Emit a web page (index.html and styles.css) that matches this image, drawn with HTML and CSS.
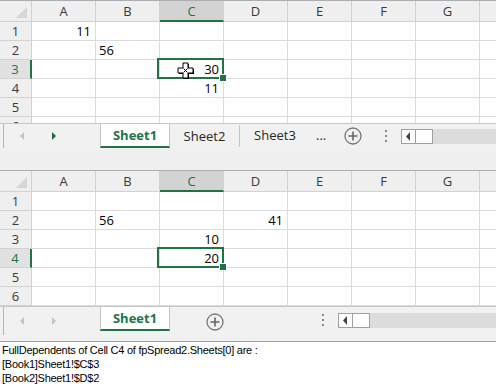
FILE: index.html
```html
<!DOCTYPE html>
<html lang="en">
<head>
  <meta charset="UTF-8" />
  <title>FullDependents</title>
  <link rel="stylesheet" href="styles.css">
</head>
<body>

  <!-- fpSpread1 -->
  <div class="spread top">
    <div class="sheet">
      <div class="grid">
        <div class="h corner"></div><div class="h">A</div><div class="h">B</div><div class="h hsel">C</div><div class="h">D</div><div class="h">E</div><div class="h">F</div><div class="h">G</div><div class="h"></div>

        <div class="r">1</div><div class="num">11</div><div></div><div></div><div></div><div></div><div></div><div></div><div></div>
        <div class="r">2</div><div></div><div>56</div><div></div><div></div><div></div><div></div><div></div><div></div>
        <div class="r rsel">3</div><div></div><div></div>
        <div class="num sel">30
          <svg class="cursor" width="18" height="18" viewBox="0 0 18 18">
            <path d="M6 1h5v5h5v5h-5v5H6v-5H1V6h5z" fill="#000" transform="translate(1 1)"/>
            <path d="M6 1h5v5h5v5h-5v5H6v-5H1V6h5z" fill="#fff" stroke="#000" stroke-width="1" stroke-linejoin="round"/>
            <path d="M6.5 6.5l4 4M10.5 6.5l-4 4" stroke="#000" stroke-width="1"/>
          </svg>
        </div>
        <div></div><div></div><div></div><div></div><div></div>
        <div class="r">4</div><div></div><div></div><div class="num">11</div><div></div><div></div><div></div><div></div><div></div>
        <div class="r">5</div><div></div><div></div><div></div><div></div><div></div><div></div><div></div><div></div>
        <div class="r">6</div><div></div><div></div><div></div><div></div><div></div><div></div><div></div><div></div>
      </div>
    </div>

    <div class="tabbar">
      <div class="edge"></div>
      <div class="nav">
        <svg width="96" height="24"><polygon points="20,8 20,16 16,12" fill="#c3c3c3"/><polygon points="48,8 48,16 52,12" fill="#1d6b3c"/></svg>
      </div>
      <div class="tab active">Sheet1</div>
      <div class="tab sep">Sheet2</div>
      <div class="tab">Sheet3</div>
      <div class="more">...</div>
      <div class="add">
        <svg width="18" height="18" viewBox="0 0 18 18"><circle cx="9" cy="9" r="8" fill="none" stroke="#777" stroke-width="1.3"/><path d="M9 4.5v9M4.5 9h9" stroke="#666" stroke-width="1.6"/></svg>
      </div>
      <div class="dots"><span></span><span></span><span></span></div>
      <div class="hscroll">
        <div class="arrow"><svg width="13" height="13"><polygon points="8,2 8,11 4,6.5" fill="#444"/></svg></div>
        <div class="thumb"></div>
        <div class="track"></div>
      </div>
    </div>
  </div>

  <div class="band"></div>

  <!-- fpSpread2 -->
  <div class="spread bottom">
    <div class="sheet">
      <div class="grid">
        <div class="h corner"></div><div class="h">A</div><div class="h">B</div><div class="h hsel">C</div><div class="h">D</div><div class="h">E</div><div class="h">F</div><div class="h">G</div><div class="h"></div>

        <div class="r">1</div><div></div><div></div><div></div><div></div><div></div><div></div><div></div><div></div>
        <div class="r">2</div><div></div><div>56</div><div></div><div class="num">41</div><div></div><div></div><div></div><div></div>
        <div class="r">3</div><div></div><div></div><div class="num">10</div><div></div><div></div><div></div><div></div><div></div>
        <div class="r rsel">4</div><div></div><div></div><div class="num sel">20</div><div></div><div></div><div></div><div></div><div></div>
        <div class="r">5</div><div></div><div></div><div></div><div></div><div></div><div></div><div></div><div></div>
        <div class="r">6</div><div></div><div></div><div></div><div></div><div></div><div></div><div></div><div></div>
      </div>
    </div>

    <div class="tabbar">
      <div class="edge"></div>
      <div class="nav">
        <svg width="96" height="28"><polygon points="20,10 20,18 16,14" fill="#c3c3c3"/><polygon points="48,10 48,18 52,14" fill="#c3c3c3"/></svg>
      </div>
      <div class="tab active">Sheet1</div>
      <div class="add wide">
        <svg width="18" height="18" viewBox="0 0 18 18"><circle cx="9" cy="9" r="8" fill="none" stroke="#777" stroke-width="1.3"/><path d="M9 4.5v9M4.5 9h9" stroke="#666" stroke-width="1.6"/></svg>
      </div>
      <div class="dots wide"><span></span><span></span><span></span></div>
      <div class="hscroll">
        <div class="arrow"><svg width="13" height="13"><polygon points="8,2 8,11 4,6.5" fill="#444"/></svg></div>
        <div class="thumb"></div>
        <div class="track"></div>
      </div>
    </div>
  </div>

  <div class="output">
    <div>FullDependents of Cell C4 of fpSpread2.Sheets[0] are :</div>
    <div>[Book1]Sheet1!$C$3</div>
    <div>[Book2]Sheet1!$D$2</div>
  </div>

</body>
</html>
```

FILE: styles.css
```css
* { box-sizing:border-box; }
body { margin:0; width:496px; height:392px; overflow:hidden; background:#fff; font-family:"Open Sans",sans-serif; }

.sheet { overflow:hidden; border-top:1px solid #abadb3; }
.top .sheet { height:123px; }
.bottom .sheet { height:136px; }

.grid {
  display:grid; width:544px;
  grid-template-columns:32px repeat(8,64px);
  grid-template-rows:21px; grid-auto-rows:19px;
}
.grid > div {
  border-right:1px solid #dadcdd; border-bottom:1px solid #dadcdd;
  font-size:13px; line-height:18px; padding:0 3px; white-space:nowrap; color:#000;
}
.grid > .h { background:#efefef; color:#3a3a3a; text-align:center; line-height:20px; border-color:#d2d2d2; }
.grid > .r { background:#efefef; color:#3a3a3a; text-align:center; border-color:#d2d2d2; }
.grid > .hsel { background:#d3d3d3; color:#217346; border-bottom:2px solid #217346; }
.grid > .rsel { background:#e1e1e1; color:#217346; border-right:2px solid #217346; }
.grid > .num { text-align:right; padding-right:4px; }

.corner { position:relative; }
.corner::after {
  content:""; position:absolute; right:4px; bottom:3px;
  border-left:11px solid transparent; border-bottom:11px solid #d6d6d6;
}

.sel { position:relative; }
.sel::before {
  content:""; position:absolute; left:-3px; top:-2px; right:-1px; bottom:-1px;
  border:2px solid #217346;
}
.sel::after {
  content:""; position:absolute; right:-4px; bottom:-4px; width:6px; height:6px;
  background:#217346; border:1px solid #fff;
}
.cursor { position:absolute; left:17px; top:2px; z-index:2; }

.tabbar {
  display:flex; height:25px; background:#f1f1f1;
  border-top:1px solid #c6c6c6; font-size:13px; color:#262626;
}
.bottom .tabbar { height:29px; }
.edge { width:4px; border-right:1px solid #b5b5b5; }
.nav { width:96px; }
.nav svg { display:block; }
.tab { width:70px; text-align:center; line-height:23px; }
.tab.active {
  background:#fff; color:#217346; font-weight:bold;
  border-left:1px solid #c6c6c6; border-right:1px solid #c6c6c6;
  border-bottom:2px solid #217346; height:24px;
}
.tab.sep { border-right:1px solid #c6c6c6; height:22px; margin-top:1px; }
.more { width:26px; padding-left:6px; line-height:22px; }
.add { width:34px; display:flex; align-items:center; justify-content:center; }
.add.wide { width:90px; align-items:flex-start; padding-top:6px; }
.dots { width:31px; display:flex; flex-direction:column; align-items:center; padding-top:6px; gap:3px; }
.dots.wide { width:78px; align-items:flex-end; padding-right:14px; padding-top:7px; }
.dots span { width:2px; height:2px; background:#8a8a8a; }

.hscroll { flex:1; display:flex; height:15px; margin-top:5px; }
.bottom .hscroll { margin-top:6px; }
.arrow { width:15px; border:1px solid #a0a0a0; background:#fff; }
.arrow svg { display:block; }
.thumb { width:17px; border:1px solid #a0a0a0; border-left:none; background:#fff; }
.track { flex:1; background:#dcdcdc; }

.band { height:22px; background:#f0f0f0; }

.output {
  border-top:6px solid #f0f0f0; box-shadow:inset 0 1px 0 #a0a0a0;
  padding:2px 2px; font-family:"Liberation Sans",Arial,sans-serif; font-size:11px;
  letter-spacing:-0.25px; line-height:14px; color:#000;
}
```
